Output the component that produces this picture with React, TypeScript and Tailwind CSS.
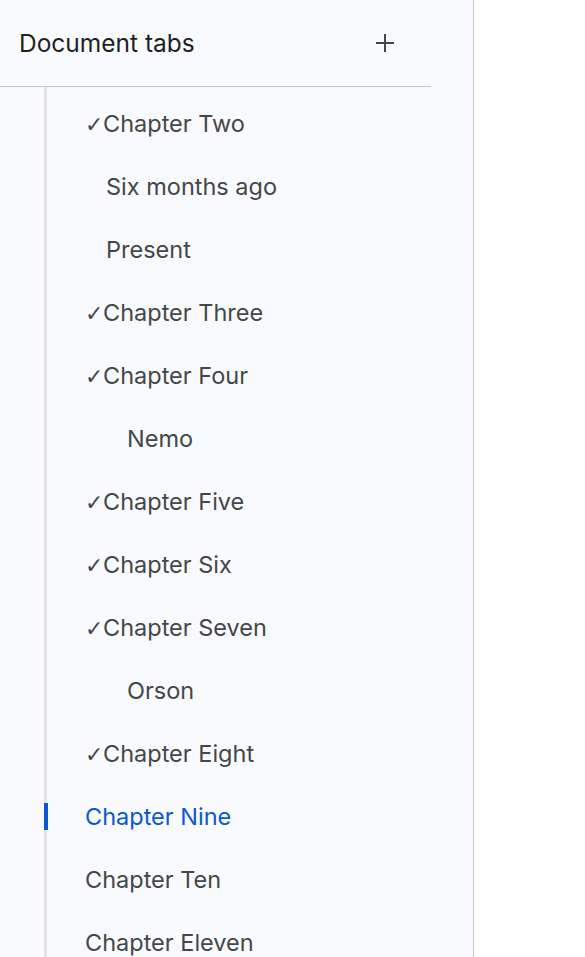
import React from "react";

type Item = { label: string; level: number; check?: boolean; active?: boolean };

const items: Item[] = [
  { label: "Chapter Two", level: 0, check: true },
  { label: "Six months ago", level: 1 },
  { label: "Present", level: 1 },
  { label: "Chapter Three", level: 0, check: true },
  { label: "Chapter Four", level: 0, check: true },
  { label: "Nemo", level: 2 },
  { label: "Chapter Five", level: 0, check: true },
  { label: "Chapter Six", level: 0, check: true },
  { label: "Chapter Seven", level: 0, check: true },
  { label: "Orson", level: 2 },
  { label: "Chapter Eight", level: 0, check: true },
  { label: "Chapter Nine", level: 0, active: true },
  { label: "Chapter Ten", level: 0 },
  { label: "Chapter Eleven", level: 0 },
];

export default function App() {
  return (
    <div
      className="flex h-[957px] w-[585px] overflow-hidden bg-white"
      style={{ fontFamily: "Inter, Roboto, 'Noto Sans', sans-serif" }}
    >
      <div className="flex h-full w-[474px] flex-col border-r border-[#c4c7c5] bg-[#f8fafd]">
        <div className="flex h-[87px] w-[431px] shrink-0 items-center justify-between border-b border-[#c4c7c5] pl-[19px] pr-[36px]">
          <span className="text-[24.5px] text-[#1f1f1f]">Document tabs</span>
          <svg width="20" height="20" viewBox="0 0 20 20" className="text-[#444746]">
            <path d="M10 1v18M1 10h18" stroke="currentColor" strokeWidth="2" />
          </svg>
        </div>
        <div className="ml-[44px] flex flex-1 flex-col border-l-[3px] border-[#e3e3e3] pt-[5px]">
          {items.map((it) => (
            <div key={it.label} className="relative flex h-[63px] shrink-0 items-center">
              {it.active && (
                <div className="absolute left-[-3px] top-[18px] h-[27px] w-[4px] bg-[#0b57d0]" />
              )}
              <span
                className={
                  "text-[23.5px] " +
                  (it.active ? "text-[#0b57d0] " : "text-[#444746] ") +
                  (it.level === 0 ? "pl-[38px]" : it.level === 1 ? "pl-[59px]" : "pl-[80px]")
                }
              >
                {it.check ? (
                  <span className="text-[22px]" style={{ fontFamily: "Roboto, sans-serif" }}>
                    ✓
                  </span>
                ) : (
                  ""
                )}
                {it.label}
              </span>
            </div>
          ))}
        </div>
      </div>
      <div className="flex-1 bg-white" />
    </div>
  );
}
